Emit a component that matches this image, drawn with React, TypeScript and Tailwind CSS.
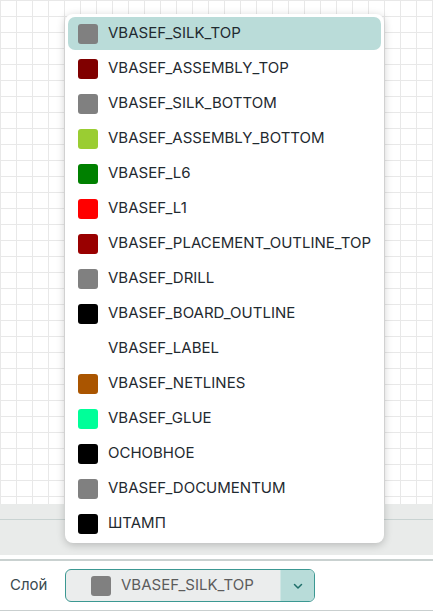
const layers = [
  { name: "VBASEF_SILK_TOP", color: "bg-[#808080]" },
  { name: "VBASEF_ASSEMBLY_TOP", color: "bg-[#800000]" },
  { name: "VBASEF_SILK_BOTTOM", color: "bg-[#808080]" },
  { name: "VBASEF_ASSEMBLY_BOTTOM", color: "bg-[#9acd32]" },
  { name: "VBASEF_L6", color: "bg-[#008000]" },
  { name: "VBASEF_L1", color: "bg-[#ff0000]" },
  { name: "VBASEF_PLACEMENT_OUTLINE_TOP", color: "bg-[#990000]" },
  { name: "VBASEF_DRILL", color: "bg-[#808080]" },
  { name: "VBASEF_BOARD_OUTLINE", color: "bg-[#000000]" },
  { name: "VBASEF_LABEL", color: "bg-transparent" },
  { name: "VBASEF_NETLINES", color: "bg-[#aa5500]" },
  { name: "VBASEF_GLUE", color: "bg-[#00ff99]" },
  { name: "ОСНОВНОЕ", color: "bg-[#000000]" },
  { name: "VBASEF_DOCUMENTUM", color: "bg-[#808080]" },
  { name: "ШТАМП", color: "bg-[#000000]" },
];

const ChevronDown = () => (
  <svg width="14" height="14" viewBox="0 0 14 14" fill="none">
    <path d="M3.5 5.5 L7 9 L10.5 5.5" stroke="#1f6f6a" strokeWidth="1.5" strokeLinecap="round" strokeLinejoin="round" />
  </svg>
);

const App = () => {
  const selected = "VBASEF_SILK_TOP";

  return (
    <div
      className="relative w-[433px] h-[612px] overflow-hidden bg-white text-[15px]"
      style={{ fontFamily: "Inter, 'Noto Sans', sans-serif" }}
    >
      {/** Canvas grid */}
      <div className="h-[504px] bg-white bg-[linear-gradient(to_right,#e8e8e8_1px,transparent_1px),linear-gradient(to_bottom,#e8e8e8_1px,transparent_1px)] bg-[size:16px_16px]" />

      {/** Gray panel */}
      <div className="h-[51px] bg-[#e9ebea] flex flex-col">
        <div className="h-[15px]" />
        <div className="h-px bg-[#c9d3d2]" />
      </div>
      <div className="h-[4px] bg-white" />
      <div className="h-[2px] bg-[#c9d1d0]" />

      {/** Bottom bar */}
      <div className="h-[50px] flex items-center border-b border-[#c9cfcf] bg-white">
        <span className="ml-[10px] w-[55px] text-[#3a4a50]">Слой</span>
        <div className="flex h-[33px] w-[250px] rounded-[6px] border border-[#3b9892] bg-[#ebeded] overflow-hidden">
          <div className="flex flex-1 items-center pl-[25px]">
            <span className="w-[20px] h-[20px] rounded-[3px] bg-[#808080]" />
            <span className="ml-[10px] text-[#5c5c5c]">{selected}</span>
          </div>
          <div className="w-[34px] flex items-center justify-center bg-[#b8dcd9] border-l border-[#cfe6e4]">
            <ChevronDown />
          </div>
        </div>
      </div>

      {/** Dropdown menu */}
      <div className="absolute left-[65px] top-[14px] w-[319px] rounded-[8px] bg-white p-[3px] shadow-[0_2px_8px_rgba(0,0,0,0.22)] flex flex-col gap-[2px]">
        {layers.map((layer) => (
          <div
            key={layer.name}
            className={
              "h-[33px] flex items-center rounded-[7px] pl-[10px] " +
              (layer.name === selected ? "bg-[#badcd9]" : "")
            }
          >
            <span className={"w-[20px] h-[20px] rounded-[3px] " + layer.color} />
            <span className="ml-[10px] text-[#1f2a30]">{layer.name}</span>
          </div>
        ))}
      </div>
    </div>
  );
};

export default App;
